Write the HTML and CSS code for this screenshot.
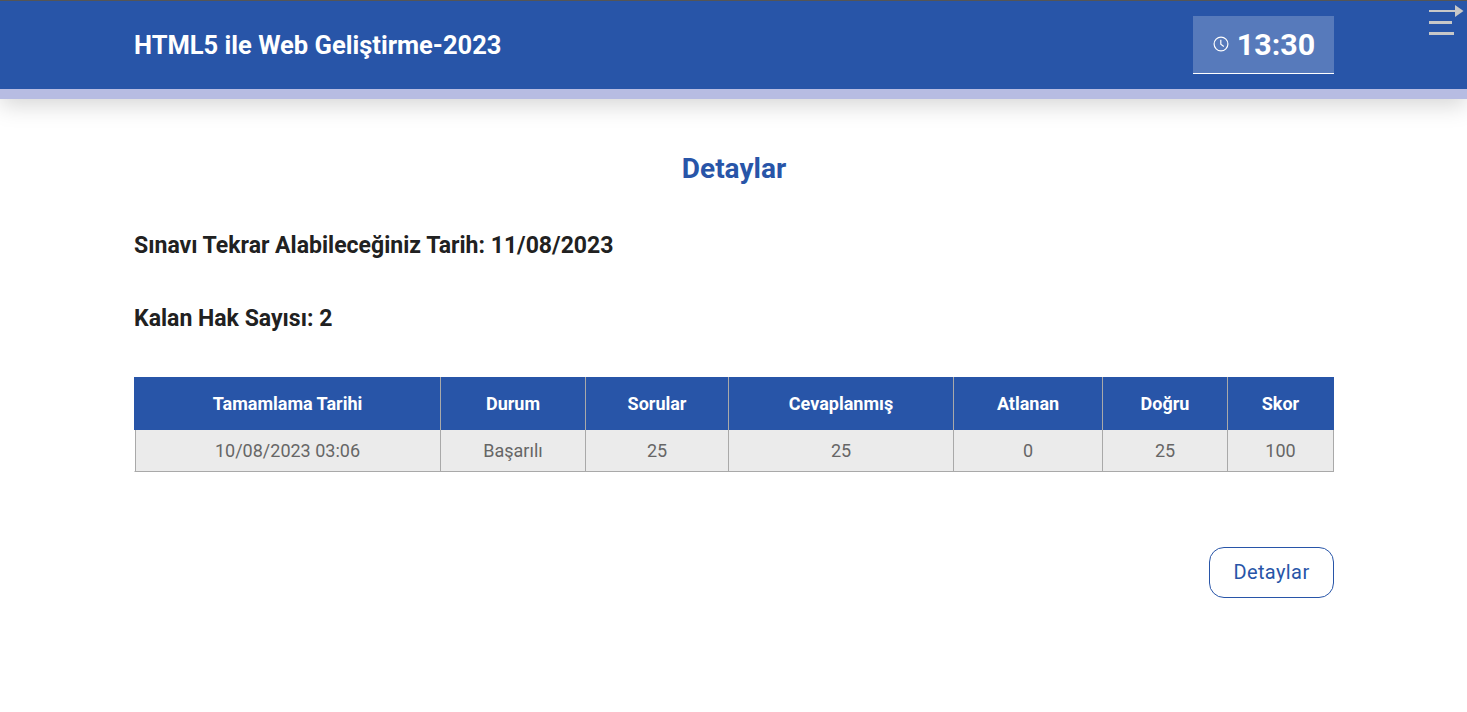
FILE: index.html
```html
<!DOCTYPE html>
<html lang="tr">
<head>
  <meta charset="UTF-8">
  <title>Detaylar</title>
  <link rel="stylesheet" href="styles.css">
</head>
<body>
  <header class="ust-bar">
    <div class="ust-icerik">
      <h1 class="egitim-adi">HTML5 ile Web Geliştirme-2023</h1>
      <div class="sayac">
        <svg class="saat" width="16" height="16" viewBox="0 0 16 16" fill="none" stroke="#fff" stroke-width="1.2">
          <circle cx="8" cy="8" r="6.9"/>
          <path d="M7.8 3.8V8.3L10.8 10.4"/>
        </svg>
        <span>13:30</span>
      </div>
    </div>
    <button class="menu-dugme" aria-label="Menü">
      <svg width="36" height="36" viewBox="0 0 36 36" fill="#c8c8c8">
        <rect x="0" y="10" width="26" height="2"/>
        <path d="M26 5L34.5 11L26 17Z"/>
        <rect x="0" y="21" width="23" height="3"/>
        <rect x="0" y="32" width="25" height="3"/>
      </svg>
    </button>
  </header>

  <main class="icerik">
    <h2 class="baslik">Detaylar</h2>
    <p class="bilgi">Sınavı Tekrar Alabileceğiniz Tarih: 11/08/2023</p>
    <p class="bilgi">Kalan Hak Sayısı: 2</p>

    <table class="sonuclar">
      <colgroup>
        <col class="k1"><col class="k2"><col class="k3"><col class="k4"><col class="k5"><col class="k6"><col class="k7">
      </colgroup>
      <thead>
        <tr>
          <th>Tamamlama Tarihi</th>
          <th>Durum</th>
          <th>Sorular</th>
          <th>Cevaplanmış</th>
          <th>Atlanan</th>
          <th>Doğru</th>
          <th>Skor</th>
        </tr>
      </thead>
      <tbody>
        <tr>
          <td>10/08/2023 03:06</td>
          <td>Başarılı</td>
          <td>25</td>
          <td>25</td>
          <td>0</td>
          <td>25</td>
          <td>100</td>
        </tr>
      </tbody>
    </table>

    <div class="alt-dugmeler">
      <a class="detay-dugme" href="#">Detaylar</a>
    </div>
  </main>
</body>
</html>
```

FILE: styles.css
```css
* {
  box-sizing: border-box;
}

html, body {
  height: 100%;
  overflow: hidden;
}

body {
  margin: 0;
  font-family: Roboto, sans-serif;
  background: #fff;
  color: #212121;
}

.ust-bar {
  position: relative;
  height: 99px;
  background: #2855a8;
  border-top: 1px solid #555;
  border-bottom: 10px solid #b7bce2;
  box-shadow: 0 6px 22px rgba(0, 0, 0, 0.17);
}

.ust-icerik {
  margin: 0 133px 0 134px;
  padding-top: 15px;
  display: flex;
  justify-content: space-between;
  align-items: flex-start;
}

.egitim-adi {
  margin: 0;
  padding-top: 13px;
  font-size: 25.5px;
  line-height: 32px;
  font-weight: 700;
  color: #fff;
}

.sayac {
  width: 141px;
  height: 58px;
  display: flex;
  align-items: center;
  justify-content: center;
  gap: 8px;
  background: rgba(255, 255, 255, 0.22);
  border-bottom: 1px solid #fff;
  color: #fff;
  font-size: 30.4px;
  font-weight: 700;
}

.saat {
  margin: -2px 0 0 1px;
}

.menu-dugme {
  position: absolute;
  top: -1px;
  left: 1429px;
  padding: 0;
  border: none;
  background: none;
}

.menu-dugme svg {
  display: block;
}

.icerik {
  margin: 0 133px 0 134px;
}

.baslik {
  margin: 0;
  padding: 52px 0 2px;
  text-align: center;
  font-size: 28px;
  line-height: 36px;
  font-weight: 700;
  color: #2855a8;
}

.bilgi {
  margin: 0;
  padding-top: 41px;
  font-size: 23.04px;
  line-height: 32px;
  font-weight: 700;
}

.sonuclar {
  width: 100%;
  margin-top: 42px;
  border-collapse: separate;
  border-spacing: 0;
  table-layout: fixed;
  font-size: 18px;
}

.k1 { width: 307px; }
.k2 { width: 145px; }
.k3 { width: 143px; }
.k4 { width: 225px; }
.k5 { width: 149px; }
.k6 { width: 125px; }
.k7 { width: 106px; }

.sonuclar th {
  height: 53px;
  padding: 0;
  background: #2855a8;
  color: #fff;
  font-weight: 700;
  border-right: 1px solid #a9a9a9;
}

.sonuclar th:first-child {
  padding-left: 1px;
}

.sonuclar th:last-child {
  border-right: none;
  padding-right: 1px;
}

.sonuclar td {
  height: 42px;
  padding: 0;
  text-align: center;
  background: #ebebeb;
  color: #666;
  border-right: 1px solid #a9a9a9;
  border-bottom: 1px solid #a9a9a9;
}

/* govde satiri basliktan 1px iceride basliyor */
.sonuclar td:first-child {
  border-left: 1px solid #fff;
  box-shadow: inset 1px 0 0 #a9a9a9;
}

.alt-dugmeler {
  display: flex;
  justify-content: flex-end;
  margin-top: 75px;
}

.detay-dugme {
  width: 125px;
  height: 51px;
  padding-bottom: 2px;
  display: flex;
  align-items: center;
  justify-content: center;
  border: 1px solid #2855a8;
  border-radius: 15px;
  color: #2855a8;
  font-size: 20px;
  letter-spacing: 0.4px;
  text-decoration: none;
}
```
